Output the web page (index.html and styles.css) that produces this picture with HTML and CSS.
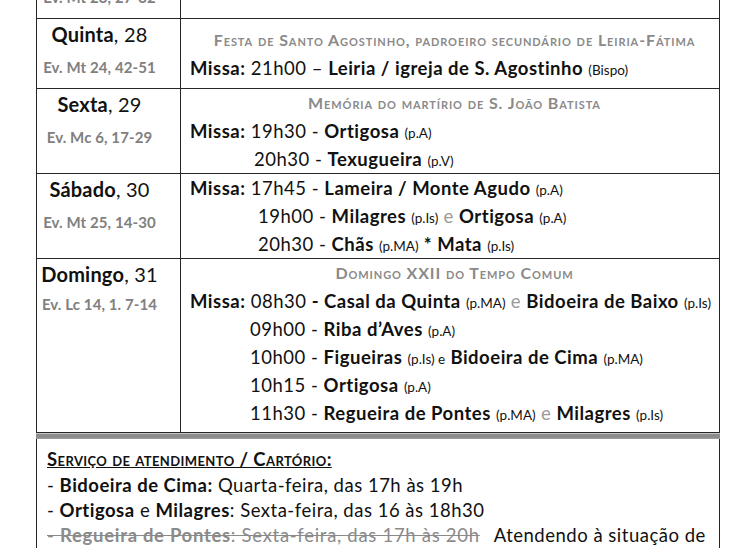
FILE: index.html
```html
<!DOCTYPE html>
<html lang="pt">
<head>
<meta charset="utf-8">
<title>Horário de Missas</title>
<link rel="stylesheet" href="styles.css">
</head>
<body>
<div class="page">
  <div class="schedule">
    <div class="row row--prev">
      <div class="day">
        <div class="day-name"><b>Quarta</b>, 27</div>
        <div class="gospel">Ev. Mt 23, 27-32</div>
      </div>
      <div class="events"></div>
    </div>

    <div class="row row--quinta">
      <div class="day">
        <div class="day-name"><b>Quinta</b>, 28</div>
        <div class="gospel">Ev. Mt 24, 42-51</div>
      </div>
      <div class="events events--quinta">
        <div class="feast">Festa de Santo Agostinho, padroeiro secundário de Leiria-Fátima</div>
        <div class="mass"><b>Missa:</b> 21h00 – <b>Leiria / igreja de S. Agostinho</b> <span class="note">(Bispo)</span></div>
      </div>
    </div>

    <div class="row">
      <div class="day">
        <div class="day-name"><b>Sexta</b>, 29</div>
        <div class="gospel">Ev. Mc 6, 17-29</div>
      </div>
      <div class="events">
        <div class="feast">Memória do martírio de S. João Batista</div>
        <div class="mass"><b>Missa:</b> 19h30 - <b>Ortigosa</b> <span class="note">(p.A)</span></div>
        <div class="mass mass--cont">20h30 - <b>Texugueira</b> <span class="note">(p.V)</span></div>
      </div>
    </div>

    <div class="row">
      <div class="day">
        <div class="day-name"><b>Sábado</b>, 30</div>
        <div class="gospel">Ev. Mt 25, 14-30</div>
      </div>
      <div class="events">
        <div class="mass"><b>Missa:</b> 17h45 - <b>Lameira / Monte Agudo</b> <span class="note">(p.A)</span></div>
        <div class="mass mass--cont mass--wide">19h00 - <b>Milagres</b> <span class="note">(p.Is)</span> <span class="conj">e</span> <b>Ortigosa</b> <span class="note">(p.A)</span></div>
        <div class="mass mass--cont mass--wide">20h30 - <b>Chãs</b> <span class="note">(p.MA)</span> <b>* Mata</b> <span class="note">(p.Is)</span></div>
      </div>
    </div>

    <div class="row">
      <div class="day">
        <div class="day-name"><b>Domingo</b>, 31</div>
        <div class="gospel gospel--tight">Ev. Lc 14, 1. 7-14</div>
      </div>
      <div class="events events--sunday">
        <div class="feast">Domingo XXII do Tempo Comum</div>
        <div class="mass"><b>Missa:</b> 08h30 <b>- Casal da Quinta</b> <span class="note">(p.MA)</span> <span class="conj">e</span> <b>Bidoeira de Baixo</b> <span class="note">(p.Is)</span></div>
        <div class="mass mass--cont mass--narrow">09h00 - <b>Riba d’Aves</b> <span class="note">(p.A)</span></div>
        <div class="mass mass--cont mass--narrow">10h00 - <b>Figueiras</b> <span class="note">(p.Is) e</span> <b>Bidoeira de Cima</b> <span class="note">(p.MA)</span></div>
        <div class="mass mass--cont mass--narrow">10h15 - <b>Ortigosa</b> <span class="note">(p.A)</span></div>
        <div class="mass mass--cont mass--narrow">11h30 - <b>Regueira de Pontes</b> <span class="note">(p.MA)</span> <span class="conj">e</span> <b>Milagres</b> <span class="note">(p.Is)</span></div>
      </div>
    </div>
  </div>

  <div class="divider"></div>

  <div class="notice">
    <div class="notice-title">Serviço de atendimento / Cartório:</div>
    <div class="notice-line">- <b>Bidoeira de Cima:</b> Quarta-feira, das 17h às 19h</div>
    <div class="notice-line">- <b>Ortigosa</b> e <b>Milagres</b>: Sexta-feira, das 16 às 18h30</div>
    <div class="notice-line"><span class="struck">- <b>Regueira de Pontes</b>: Sexta-feira, das 17h às 20h</span><span class="gap"></span>Atendendo à situação de</div>
    <div class="notice-line">pandemia, o atendimento é feito apenas por marcação.</div>
  </div>
</div>
</body>
</html>
```

FILE: styles.css
```css
html, body {
  margin: 0;
  padding: 0;
  background: #ffffff;
}

body {
  font-family: Lato, "Open Sans", sans-serif;
  color: #111111;
  overflow: hidden;
  height: 548px;
}

.page {
  margin: -51px 0 0 36px;
  width: 684px;
}

.row {
  display: grid;
  grid-template-columns: 144px 1fr;
  border: 1px solid #262626;
  border-top: 0;
}

.day {
  border-right: 1px solid #262626;
  padding: 1px 18px 7px 0;
  text-align: center;
}

.day-name {
  font-size: 20px;
  line-height: 28px;
  letter-spacing: 0.2px;
}

.gospel {
  font-size: 15px;
  font-weight: 700;
  color: #808080;
  line-height: 28px;
  margin-top: 5px;
  letter-spacing: 0.1px;
}

.gospel--tight {
  margin-top: 2px;
}

.events {
  padding: 0 0 0 9px;
}

.events--quinta {
  padding-top: 7px;
}

.events--sunday {
  padding-bottom: 5px;
}

.feast {
  font-variant: small-caps;
  font-weight: 700;
  color: #8a8a8a;
  font-size: 16px;
  letter-spacing: 0.9px;
  line-height: 28px;
  text-align: center;
}

.mass {
  font-size: 18.5px;
  letter-spacing: 0.5px;
  line-height: 28px;
  white-space: nowrap;
}

.mass--cont {
  padding-left: 64px;
}

.mass--wide {
  padding-left: 68px;
}

.mass--narrow {
  padding-left: 60px;
}

.note {
  font-size: 13.5px;
  letter-spacing: 0;
  line-height: 1;
}

.conj {
  color: #9a9a9a;
}

.divider {
  height: 4px;
  background: #8c8c8c;
  border-top: 1px solid #c4c4c4;
  border-bottom: 1px solid #9c9c9c;
}

.notice {
  border-left: 1px solid #262626;
  border-right: 1px solid #262626;
  padding: 8px 10px 0 10px;
  height: 200px;
}

.notice-title {
  font-variant: small-caps;
  font-weight: 700;
  font-size: 18.5px;
  letter-spacing: 0.4px;
  line-height: 25.5px;
  text-decoration: underline;
}

.notice-line {
  font-size: 18.5px;
  letter-spacing: 0.5px;
  line-height: 25px;
  white-space: nowrap;
}

.struck {
  color: #8a8a8a;
  letter-spacing: 0.7px;
  text-decoration: line-through;
}

.gap {
  display: inline-block;
  width: 14px;
}
```
